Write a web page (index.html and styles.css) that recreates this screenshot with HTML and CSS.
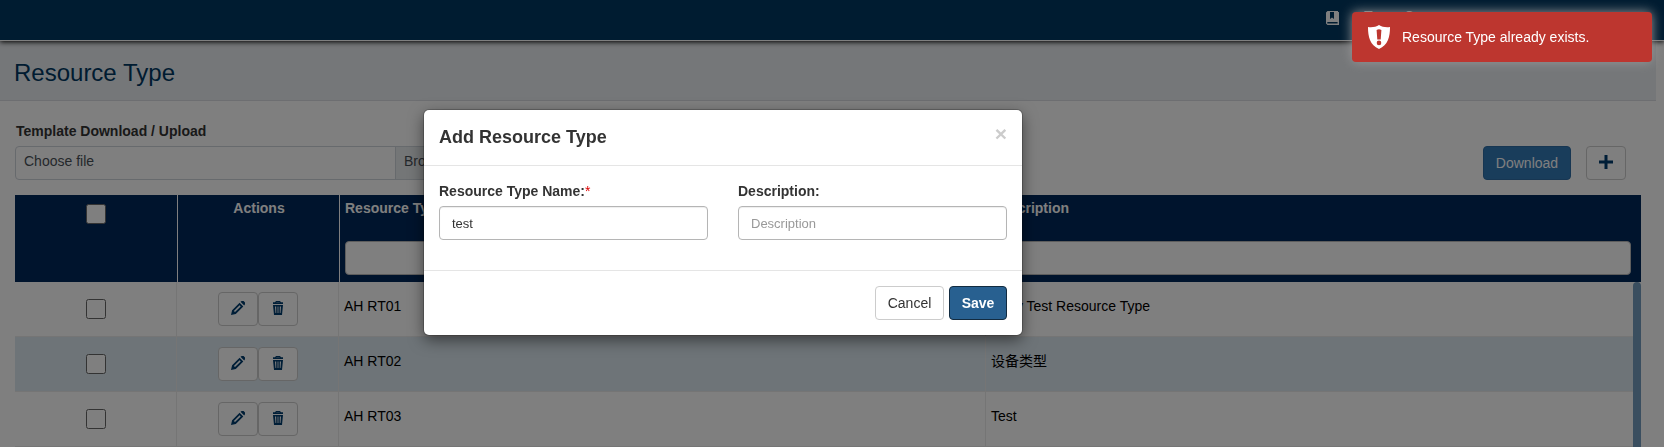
FILE: index.html
```html
<!DOCTYPE html>
<html lang="en">
<head>
<meta charset="utf-8">
<title>Resource Type</title>
<link rel="stylesheet" href="styles.css">
</head>
<body>
<svg class="defs" width="0" height="0">
  <symbol id="pencil" viewBox="0 0 14 14"><path fill-rule="evenodd" d="M0 14 1.1 9.2 8.6 1.700 12.300 5.400 4.800 12.900ZM2.900 10 4 11.100 9.700 5.400 8.600 4.300ZM9.500 .8 10.700 0H12.600L14 1.400V3.300L13.200 4.500Z"/></symbol>
  <symbol id="trash" viewBox="0 0 10 14"><path fill-rule="evenodd" d="M3 0H7L8 1.3H10V3H0V1.3H2ZM3.3 1.3H6.7V.9H3.3ZM0 4H10L9 14H1ZM2 5.4 2.5 12H3.2V5.4ZM4.6 5.4V12H5.4V5.4ZM6.8 5.4V12H7.5L8 5.4Z"/></symbol>
</svg>
<div class="page">
  <header class="topbar">
    <svg class="book" width="13" height="14" viewBox="0 0 13 14"><path fill-rule="evenodd" d="M1.5 0H12V1H13V14H1.5L0 12.5V1.5ZM4 1V8L6 6.5 8 8V1ZM1.3 11V12.4H11.6V11Z"/></svg>
    <span class="tenant">Trane Commerce</span>
  </header>
  <div class="heading"><h1>Resource Type</h1></div>
  <main class="content">
    <label class="upload-label">Template Download / Upload</label>
    <div class="toolbar">
      <div class="file"><span class="file-name">Choose file</span><span class="file-browse">Browse</span></div>
      <button class="btn download">Download</button>
      <button class="btn plus"><svg width="14" height="14" viewBox="0 0 14 14"><path d="M5.5 0h3v5.5H14v3H8.500V14h-3V8.500H0v-3h5.500z"/></svg></button>
    </div>
    <div class="table">
      <div class="row head">
        <div class="cell check"><i class="box"></i></div>
        <div class="cell actions">Actions</div>
        <div class="cell">Resource Type Name<i class="filter"></i></div>
        <div class="cell">Description<i class="filter"></i></div>
      </div>
      <div class="rows">
        <div class="row">
          <div class="cell check"><i class="box"></i></div>
          <div class="cell actions"><button class="btn icon"><svg width="14" height="14"><use href="#pencil"/></svg></button><button class="btn icon"><svg width="10" height="14"><use href="#trash"/></svg></button></div>
          <div class="cell">AH RT01</div><div class="cell desc">Andy Test Resource Type</div>
        </div>
        <div class="row striped">
          <div class="cell check"><i class="box"></i></div>
          <div class="cell actions"><button class="btn icon"><svg width="14" height="14"><use href="#pencil"/></svg></button><button class="btn icon"><svg width="10" height="14"><use href="#trash"/></svg></button></div>
          <div class="cell">AH RT02</div><div class="cell">设备类型</div>
        </div>
        <div class="row">
          <div class="cell check"><i class="box"></i></div>
          <div class="cell actions"><button class="btn icon"><svg width="14" height="14"><use href="#pencil"/></svg></button><button class="btn icon"><svg width="10" height="14"><use href="#trash"/></svg></button></div>
          <div class="cell">AH RT03</div><div class="cell">Test</div>
        </div>
        <i class="scrollbar"></i>
      </div>
    </div>
  </main>
</div>
<div class="backdrop"></div>
<section class="modal">
  <div class="modal-head"><h2>Add Resource Type</h2><button class="close">×</button></div>
  <div class="modal-body">
    <div class="field"><label>Resource Type Name:<span class="required">*</span></label><input value="test"></div>
    <div class="field"><label>Description:</label><input placeholder="Description"></div>
  </div>
  <div class="modal-foot"><button class="btn cancel">Cancel</button><button class="btn save">Save</button></div>
</section>
<div class="toast">
  <svg width="22" height="24" viewBox="0 0 22 24"><path fill-rule="evenodd" d="M11 0C14 2 18 2.500 22 2C22 12 20 20 11 24C2 20 0 12 0 2C4 2.500 8 2 11 0ZM8.600 5 9.300 14.500H12.700L13.400 5Q11 3.400 8.600 5ZM11 15.600A2.300 2.300 0 1 0 11 20.200A2.300 2.300 0 1 0 11 15.600Z"/></svg>
  <span>Resource Type already exists.</span>
</div>
</body>
</html>
```
FILE: styles.css
```css
* { box-sizing: border-box; }
body { margin: 0; height: 447px; overflow: hidden; background: #fff; color: #333; font: 14px/20px "Liberation Sans", "Noto Sans CJK SC", Arial, sans-serif; }
button, input { font: inherit; }
.defs { position: absolute; }
.page { height: 447px; overflow: hidden; }
.topbar { position: relative; display: flex; align-items: flex-start; height: 41px; padding: 11px 0 0 1326px; background: #003862; border-bottom: 1px solid #fff; box-shadow: 0 1px 5px #000; color: #fff; }
.book { fill: #fff; }
.tenant { margin: -5px 0 0 25px; }
.heading { width: 1656px; height: 60px; padding: 18px 14px; background: #ebeef2; border-bottom: 1px solid #dadde3; }
h1 { margin: 0; font-size: 24px; line-height: 28px; font-weight: 400; color: #003862; }
.content { padding: 20px 23px 0 15px; }
.upload-label { display: block; padding-left: 1px; font-weight: 700; line-height: 20px; }
.toolbar { display: flex; height: 54px; padding-top: 5px; }
.file { display: flex; width: 446px; height: 34px; margin-right: auto; border: 1px solid #ced4da; border-radius: 4px; color: #495057; line-height: 29px; }
.file-name { width: 380px; padding-left: 8px; border-right: 1px solid #ced4da; }
.file-browse { flex: 1; padding-left: 8px; background: #e9ecef; }
.btn { height: 34px; border: 1px solid #ccc; border-radius: 4px; background: #fff; padding: 0; line-height: 20px; }
.download { width: 88px; margin-right: 15px; color: #fff; background: #337ab7; border-color: #2e6da4; }
.plus { width: 40px; margin-right: 15px; }
.plus svg, .icon svg { display: block; margin: auto; fill: #003c6e; }
.plus svg { position: relative; top: -1px; }
.icon svg { position: relative; top: -1px; }
.row { display: grid; grid-template-columns: 162px 162px 647px 1fr; height: 55px; color: #000; }
.cell { padding: 14px 5px; border-right: 1px solid #eaeaea; border-bottom: 1px solid #eaeaea; }
.row .cell:last-child { border-right: 0; }
.row .cell.check { padding: 17px 0 0; }
.check { display: flex; justify-content: center; }
.box { width: 20px; height: 20px; background: #fff; border: 1px solid #666; border-radius: 2.500px; }
.row .cell.actions { padding: 10px 0 0; }
.actions { display: flex; justify-content: center; }
.icon { width: 40px; }
.striped { background: #dce8f0; }
.row.head { grid-template-columns: 163px 162px 647px 1fr; height: 87px; background: #00285a; color: #fff; font-weight: 700; }
.head .cell { padding: 3px 10px 0 5px; border-right-color: #fff; border-bottom: 0; }
.row.head .check { padding: 9px 0 0; }
.row.head .actions { padding: 3px 0 0 1px; }
.filter { display: block; height: 34px; margin-top: 23px; background: #fff; border: 1px solid #bbb; border-radius: 4px; }
.rows { position: relative; padding-right: 8px; }
.scrollbar { position: absolute; right: 0; top: 0; width: 8px; height: 220px; border-radius: 4px; background: #759dbe; }
.backdrop { position: fixed; inset: 0; background: rgba(0, 0, 0, .5); }
.modal { position: absolute; left: 424px; top: 110px; width: 598px; height: 225px; background: #fff; border-radius: 5px; box-shadow: 0 0 0 1px rgba(0, 0, 0, .2), 0 5px 15px rgba(0, 0, 0, .5); }
.modal-head { display: flex; justify-content: space-between; height: 56px; padding: 14px 15px; border-bottom: 1px solid #e5e5e5; }
h2 { margin: 0; font-size: 18px; line-height: 26px; }
.close { height: 21px; margin: -1px 0 0; padding: 0; border: 0; background: none; color: #ccc; font-size: 21px; line-height: 21px; font-weight: 700; }
.modal-body { display: grid; grid-template-columns: 1fr 1fr; gap: 30px; height: 104px; padding: 15px; }
.field label { display: block; font-weight: 700; margin-bottom: 5px; }
.required { color: #d00; font-weight: 400; }
.field input { display: block; width: 100%; height: 34px; padding: 0 12px; border: 1px solid #b5b5b5; border-radius: 4px; color: #333; font-size: 13px; box-shadow: inset 0 1px 1px rgba(0,0,0,.07); }
.field input::placeholder { color: #999; }
.modal-foot { display: flex; justify-content: flex-end; gap: 5px; height: 65px; padding: 15px; border-top: 1px solid #e5e5e5; }
.cancel { width: 69px; color: #333; }
.save { width: 58px; color: #fff; background: #286090; border-color: #122b40; font-weight: 700; }
.toast { position: absolute; left: 1352px; top: 12px; width: 300px; height: 50px; display: flex; align-items: center; gap: 12px; padding-left: 16px; background: #bd362f; border-radius: 4px; color: #fff; box-shadow: 0 0 12px #999; }
.toast svg { fill: #fff; }
```
